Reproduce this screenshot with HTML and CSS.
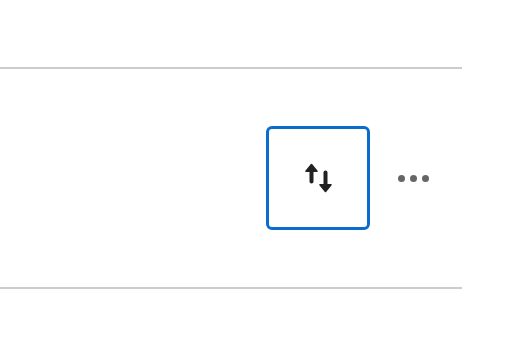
FILE: index.html
```html
<!DOCTYPE html>
<html>
<head>
<meta charset="utf-8">
<link rel="stylesheet" href="styles.css">
</head>
<body>
<div class="page">
  <div class="row">
    <button class="sort-btn" aria-label="Sort">
      <svg class="sort-icon" width="28" height="30" viewBox="0 0 28 30">
        <g fill="#222" stroke="#222" stroke-width="1.6" stroke-linejoin="round" stroke-linecap="round">
          <path d="M6.5 1.5 L12 8.2 L1 8.2 Z"/>
          <path d="M20.5 28.5 L26 21.8 L15 21.8 Z"/>
        </g>
        <g stroke="#222" stroke-width="4" stroke-linecap="round">
          <line x1="6.5" y1="7" x2="6.5" y2="18.5"/>
          <line x1="20.5" y1="9.5" x2="20.5" y2="23"/>
        </g>
      </svg>
    </button>
    <div class="more" aria-label="More">
      <span class="dot"></span><span class="dot"></span><span class="dot"></span>
    </div>
  </div>
</div>
</body>
</html>
```

FILE: styles.css
```css
html, body {
  margin: 0;
  padding: 0;
  background: #fff;
}
.page {
  width: 462px;
  padding-top: 67px;
}
.row {
  height: 218px;
  border-top: 2px solid #cccccc;
  border-bottom: 2px solid #cccccc;
  display: flex;
  align-items: center;
  justify-content: flex-end;
  padding-right: 33px;
  gap: 28px;
}
.sort-btn {
  width: 104px;
  height: 104px;
  box-sizing: border-box;
  border: 3px solid #0a6ccc;
  border-radius: 6px;
  background: #fff;
  padding: 0;
  display: flex;
  align-items: center;
  justify-content: center;
}
.sort-icon {
  display: block;
  margin-left: 1px;
}
.more {
  display: flex;
  gap: 5px;
  align-items: center;
}
.dot {
  width: 7px;
  height: 7px;
  border-radius: 50%;
  background: #666;
}
```
